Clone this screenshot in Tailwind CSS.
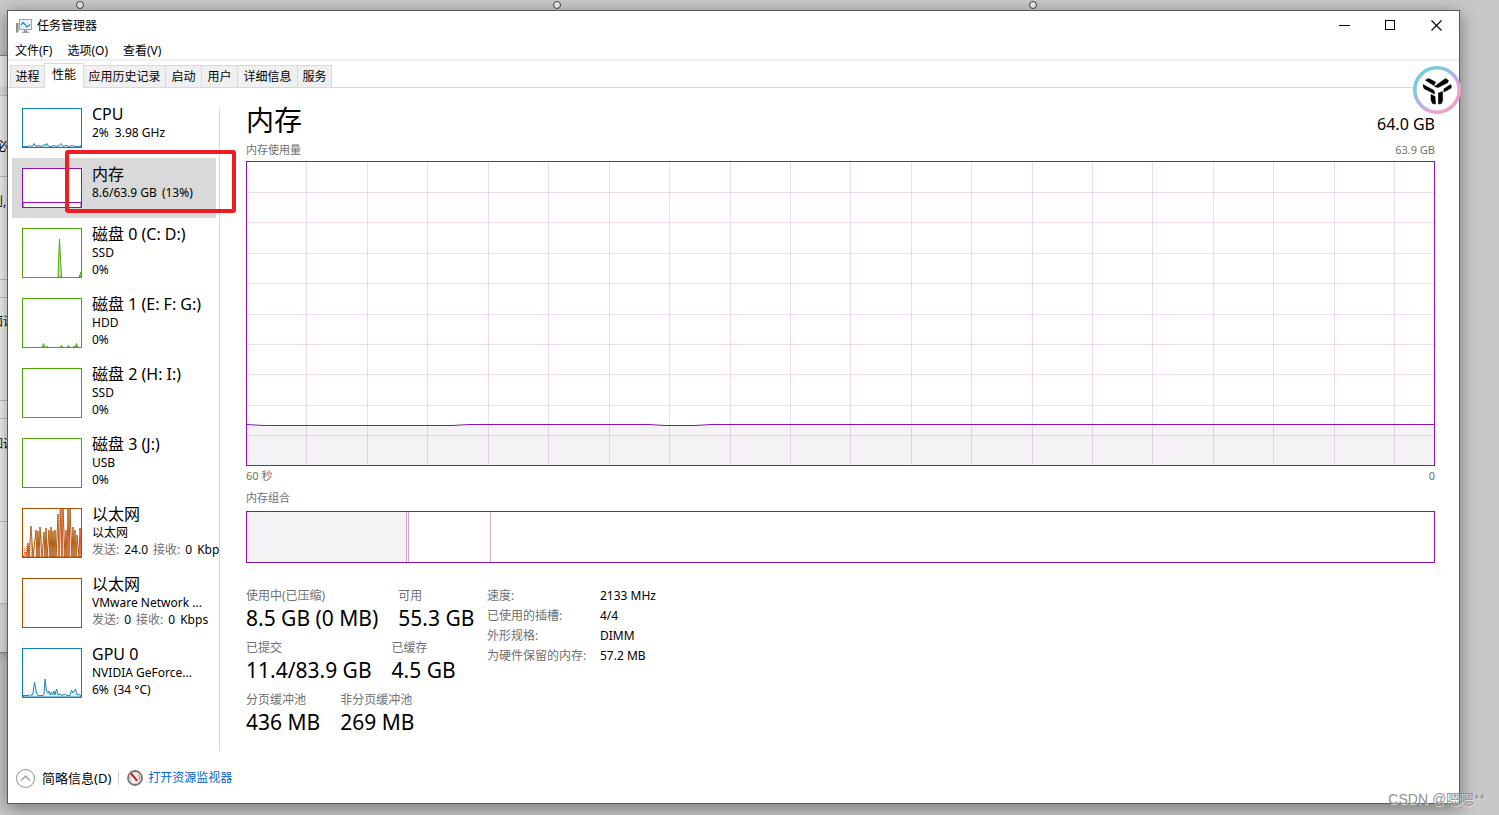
<!DOCTYPE html>
<html lang="zh-CN">
<head>
<meta charset="utf-8">
<title>任务管理器</title>
<script src="https://cdn.jsdelivr.net/npm/@tailwindcss/browser@4"></script>
</head>
<body class="relative flex min-h-screen overflow-x-hidden bg-[#c8c8c8] pt-[10px] pr-[39px] pb-[11px] pl-[7px] font-['Noto_Sans','Noto_Sans_CJK_SC',sans-serif] text-[12px] leading-5 text-black">

<!-- Window behind the task manager -->
<div class="absolute top-[55px] left-0 h-[598px] w-[8px] overflow-hidden border-y border-[#8a8a8a] bg-[#f3f3f3] shadow-[0_2px_10px_rgba(0,0,0,0.35)]">
  <div class="absolute top-[30px] h-[10px] w-full border-b border-[#c4c4c4] bg-[#e2e2e2]"></div>
  <div class="absolute top-[120px] h-px w-full bg-[#c4c4c4]"></div>
  <div class="absolute top-[223px] h-[19px] w-full border-y border-[#c4c4c4]"></div>
  <div class="absolute top-[344px] h-[19px] w-full border-y border-[#c4c4c4]"></div>
  <div class="absolute top-[465px] h-px w-full bg-[#c4c4c4]"></div>
  <div class="absolute top-[547px] h-[50px] w-full border-t border-[#c4c4c4] bg-[#e0e0e0]"></div>
  <span class="absolute top-[81px] -left-[4px] whitespace-nowrap">必</span>
  <span class="absolute top-[136px] -left-[9px] whitespace-nowrap">则,</span>
  <span class="absolute top-[256px] -left-[9px] whitespace-nowrap">面说</span>
  <span class="absolute top-[378px] -left-[9px] whitespace-nowrap">如调</span>
</div>

<!-- Selection handles -->
<div class="absolute top-[1px] left-[76px] size-2 rounded-full border border-[#444] bg-[#eee]"></div>
<div class="absolute top-[1px] left-[553px] size-2 rounded-full border border-[#444] bg-[#eee]"></div>
<div class="absolute top-[1px] left-[1029px] size-2 rounded-full border border-[#444] bg-[#eee]"></div>

<div class="relative flex min-w-0 flex-1 flex-col border border-[#5a5a5a] bg-white shadow-[0_4px_16px_rgba(0,0,0,0.42)]">

  <header class="flex h-[30px] items-center">
    <svg class="ml-2 h-4 w-4" viewBox="0 0 16 16" fill="none">
      <rect x="0" y="5" width="2.5" height="9.500" fill="#8c8f92"/>
      <rect x="0.5" y="6" width="1" height="2" fill="#5fae4a"/>
      <rect x="3.5" y="1.5" width="12" height="10" fill="#e4f1f9" stroke="#9da3a8"/>
      <path d="M5 7l2-2.5 2 2 2 2.5 3-2.5" stroke="#2386c4" stroke-width="1.2"/>
      <path d="M8 12h3v1.500h2V15H6v-1.500h2z" fill="#9da3a8"/>
    </svg>
    <h1 class="ml-[5px]">任务管理器</h1>
    <div class="ml-auto flex h-full pb-[2px]">
      <button class="flex w-[45px] items-center justify-center" aria-label="最小化"><svg width="11" height="11"><path d="M0 5.500h11" stroke="#000"/></svg></button>
      <button class="flex w-[46px] items-center justify-center" aria-label="最大化"><svg width="11" height="11" fill="none"><rect x="0.5" y="0.5" width="9" height="9" stroke="#000"/></svg></button>
      <button class="flex w-[46px] items-center justify-center" aria-label="关闭"><svg width="11" height="11"><path d="M.5.5l10 10M10.500.5l-10 10" stroke="#000" stroke-width="1.100"/></svg></button>
    </div>
  </header>

  <nav class="flex h-5 gap-[15px] border-b-2 border-[#f0f0f0] pl-[7px] leading-5" aria-label="菜单">
    <button>文件(F)</button>
    <button>选项(O)</button>
    <button>查看(V)</button>
  </nav>

  <div class="flex h-[27px] items-end border-b border-[#d9d9d9] pl-[2px]" role="tablist">
    <button role="tab" class="h-[22px] w-[34px] border-t border-l border-[#d9d9d9] bg-[#f0f0f0]">进程</button>
    <button role="tab" aria-selected="true" class="-mb-px h-[25px] w-[40px] border-x border-t border-[#d9d9d9] bg-white pb-[3px]">性能</button>
    <button role="tab" class="h-[22px] w-[82px] border-t border-r border-[#d9d9d9] bg-[#f0f0f0] whitespace-nowrap">应用历史记录</button>
    <button role="tab" class="h-[22px] w-[36px] border-t border-r border-[#d9d9d9] bg-[#f0f0f0]">启动</button>
    <button role="tab" class="h-[22px] w-[36px] border-t border-r border-[#d9d9d9] bg-[#f0f0f0]">用户</button>
    <button role="tab" class="h-[22px] w-[60px] border-t border-r border-[#d9d9d9] bg-[#f0f0f0] whitespace-nowrap">详细信息</button>
    <button role="tab" class="h-[22px] w-[34px] border-t border-r border-[#d9d9d9] bg-[#f0f0f0]">服务</button>
  </div>

  <div class="flex flex-1">
    <!-- Resource list -->
    <aside class="flex pt-[10px] pl-1">
      <div class="w-[207px]">
        <button class="flex h-[60px] w-[204px] gap-[10px] pl-[10px] text-left">
          <svg class="mt-[10px] h-10 w-[60px] shrink-0" viewBox="0 0 60 40" fill="none" stroke="#117dbb">
            <path d="M1 38.500h5l2-1 1 1 2-1 1-2 2 3 3-1 2 1 2-1 1.500-1 1.500 1 1-2 2 3h3l2-1 3 1 2-1 2-2 2 3 3-1 3 1 3-1 4 1h3l2-1v2H1z" fill="#cfe5f1" stroke-width=".9"/>
            <rect x=".5" y=".5" width="59" height="39"/>
          </svg>
          <span class="block w-[127px] shrink-0 overflow-hidden pt-[6px] leading-[17px] whitespace-nowrap"><b class="block text-[16px] leading-5 font-normal">CPU</b><span class="flex gap-[6px]"><span>2%</span><span>3.98 GHz</span></span></span>
        </button>
        <button class="relative flex h-[60px] w-[204px] gap-[10px] bg-[#d9d9d9] pl-[10px] text-left">
          <svg class="mt-[10px] h-10 w-[60px] shrink-0" viewBox="0 0 60 40" fill="none" stroke="#8b12ae">
            <rect x=".5" y=".5" width="59" height="39" fill="#fff"/>
            <path d="M1 34.500h58v5H1z" fill="#f4f2f4"/>
            <rect x=".5" y=".5" width="59" height="39"/>
          </svg>
          <span class="block w-[127px] shrink-0 overflow-hidden pt-[6px] leading-[17px] whitespace-nowrap"><b class="block text-[16px] leading-5 font-normal">内存</b><span class="flex gap-[5px]"><span>8.6/63.9 GB</span><span>(13%)</span></span></span>
          <span class="absolute -top-[8px] left-[53px] h-[63px] w-[171px] rounded-[3px] border-4 border-[#ee1c24]"></span>
        </button>
        <button class="flex h-[70px] w-[204px] gap-[10px] pl-[10px] text-left">
          <svg class="mt-[10px] h-[50px] w-[60px] shrink-0" viewBox="0 0 60 50" fill="none" stroke="#4da60c">
            <path d="M36 49l1.500-38L39.500 49zM57 49l2-5v5z" fill="#c9e4b6"/>
            <rect x=".5" y=".5" width="59" height="49"/>
          </svg>
          <span class="block w-[127px] shrink-0 overflow-hidden pt-[6px] leading-[17px] whitespace-nowrap"><b class="block text-[16px] leading-5 font-normal">磁盘 0 (C: D:)</b><span class="block">SSD</span><span class="block">0%</span></span>
        </button>
        <button class="flex h-[70px] w-[204px] gap-[10px] pl-[10px] text-left">
          <svg class="mt-[10px] h-[50px] w-[60px] shrink-0" viewBox="0 0 60 50" fill="none" stroke="#4da60c">
            <path d="M20 49l1.500-3.500L23 49zM38 49l1.500-1.500L41 49zM45 49l1.500-1.500L48 49zM53 49l1.500-3.500L56 49zM24 48.500h2M51 48.500h2" fill="#8fc765" stroke-width=".8"/>
            <rect x=".5" y=".5" width="59" height="49"/>
          </svg>
          <span class="block w-[127px] shrink-0 overflow-hidden pt-[6px] leading-[17px] whitespace-nowrap"><b class="block text-[16px] leading-5 font-normal">磁盘 1 (E: F: G:)</b><span class="block">HDD</span><span class="block">0%</span></span>
        </button>
        <button class="flex h-[70px] w-[204px] gap-[10px] pl-[10px] text-left">
          <span class="mt-[10px] block h-[50px] w-[60px] shrink-0 border border-[#4da60c]"></span>
          <span class="block w-[127px] shrink-0 overflow-hidden pt-[6px] leading-[17px] whitespace-nowrap"><b class="block text-[16px] leading-5 font-normal">磁盘 2 (H: I:)</b><span class="block">SSD</span><span class="block">0%</span></span>
        </button>
        <button class="flex h-[70px] w-[204px] gap-[10px] pl-[10px] text-left">
          <span class="mt-[10px] block h-[50px] w-[60px] shrink-0 border border-[#4da60c]"></span>
          <span class="block w-[127px] shrink-0 overflow-hidden pt-[6px] leading-[17px] whitespace-nowrap"><b class="block text-[16px] leading-5 font-normal">磁盘 3 (J:)</b><span class="block">USB</span><span class="block">0%</span></span>
        </button>
        <button class="flex h-[70px] w-[204px] gap-[10px] pl-[10px] text-left">
          <svg class="mt-[10px] h-[50px] w-[60px] shrink-0" viewBox="0 0 60 50" fill="none" stroke="#a74f01">
            <path d="M1 49L4 44L5 49L6 35L7 49L9 18L11 49L14 22L15 49L16 23L17 49L18 19L20 49L22 24L23 49L24 20L25 49L27 22L28 49L29 19L30 49L31 23L32 49L33 22L34 49L36 6L37 49L39 1L40 49L41 1L43 49L44 22L45 49L46 1L47 49L48 1L50 49L51 19L52 49L53 22L54 49L55 27L57 49L58 20L59 49z" fill="#d99a6c" fill-opacity=".35" stroke-width=".9"/>
            <path d="M2.500 49V39M4.500 49V38M9.500 49V19M19.500 49V27M37.500 49V1M40.500 49V1M46.500 49V24M53.500 49V30M58.500 49V21" stroke="#f0704a" stroke-dasharray="1 1"/>
            <rect x=".5" y=".5" width="59" height="49"/>
          </svg>
          <span class="block w-[127px] shrink-0 overflow-hidden pt-[6px] leading-[17px] whitespace-nowrap"><b class="block text-[16px] leading-5 font-normal">以太网</b><span class="block">以太网</span><span class="flex gap-[5px]"><span class="text-[#707070]">发送:</span><span>24.0</span><span class="text-[#707070]">接收:</span><span>0</span><span>Kbps</span></span></span>
        </button>
        <button class="flex h-[70px] w-[204px] gap-[10px] pl-[10px] text-left">
          <span class="mt-[10px] block h-[50px] w-[60px] shrink-0 border border-[#a74f01]"></span>
          <span class="block w-[127px] shrink-0 overflow-hidden pt-[6px] leading-[17px] whitespace-nowrap"><b class="block text-[16px] leading-5 font-normal">以太网</b><span class="block">VMware Network ...</span><span class="flex gap-[5px]"><span class="text-[#707070]">发送:</span><span>0</span><span class="text-[#707070]">接收:</span><span>0</span><span>Kbps</span></span></span>
        </button>
        <button class="flex h-[70px] w-[204px] gap-[10px] pl-[10px] text-left">
          <svg class="mt-[10px] h-[50px] w-[60px] shrink-0" viewBox="0 0 60 50" fill="none" stroke="#117dbb">
            <path d="M1 47.500H7L8 46.500L10 47.500L11 45L12.500 34L14.500 45L16 47.500H21L22 46L23 31L24.500 43L26 45L27 43L28 47L29.500 44L30.500 47L32 43L33 47L34.500 41L36 47L38 46L40 47.500L43 46L45 47.500H48L49.500 42L51 45L53.500 41L55 47L57 46.500L59 47.500V49H1z" fill="#e3f0f7" stroke-width=".9"/>
            <rect x=".5" y=".5" width="59" height="49"/>
          </svg>
          <span class="block w-[127px] shrink-0 overflow-hidden pt-[6px] leading-[17px] whitespace-nowrap"><b class="block text-[16px] leading-5 font-normal">GPU 0</b><span class="block">NVIDIA GeForce...</span><span class="flex gap-[5px]"><span>6%</span><span>(34 °C)</span></span></span>
        </button>
      </div>
      <div class="mt-[10px] w-px bg-[#d9d9d9]"></div>
    </aside>

    <!-- Memory details -->
    <main class="flex min-w-0 flex-1 flex-col pt-3 pr-6 pb-[17px] pl-[26px]">
      <div class="flex h-10 items-center justify-between">
        <h2 class="text-[28px] leading-10">内存</h2>
        <span class="mt-2 text-[16px]">64.0 GB</span>
      </div>
      <div class="mb-px flex justify-between text-[11px] text-[#707070]"><span>内存使用量</span><span>63.9 GB</span></div>
      <div class="relative min-h-[240px] flex-1 border border-[#8b12ae]">
        <svg class="absolute inset-0 h-full w-full" viewBox="0 0 1187 303" preserveAspectRatio="none" fill="none" stroke-width="1">
          <path d="M0 263.500L16 264.500H205L222 262.500H402L418 263.500H448L464 262.500H1187V303H0z" fill="#f4f2f4"/>
          <g stroke="#8b12ae" stroke-opacity=".15" shape-rendering="crispEdges">
            <path d="M59.500 0v303M120.500 0v303M180.500 0v303M241.500 0v303M301.500 0v303M362.500 0v303M422.500 0v303M483.500 0v303M543.500 0v303M603.500 0v303M664.500 0v303M724.500 0v303M785.500 0v303M845.500 0v303M905.500 0v303M966.500 0v303M1026.500 0v303M1087.500 0v303M1147.500 0v303"/>
            <path d="M0 30.500h1187M0 60.500h1187M0 91.500h1187M0 121.500h1187M0 152.500h1187M0 182.500h1187M0 212.500h1187M0 243.500h1187M0 273.500h1187"/>
          </g>
          <path d="M0 262.500L16 263.500H205L222 262.500H402L418 263.500H448L464 262.500H1187" stroke="#8b12ae"/>
        </svg>
      </div>
      <div class="flex justify-between text-[11px] text-[#707070]"><span>60 秒</span><span>0</span></div>
      <div class="mt-[2px] text-[11px] text-[#707070]">内存组合</div>
      <div class="mt-[3px] flex h-[52px] shrink-0 border border-[#8b12ae]">
        <div class="w-[13.5%] border-r border-[#cfaad9] bg-[#f4f2f4]"></div>
        <div class="w-[2px] border-r border-[#cfaad9]"></div>
        <div class="w-[6.9%] border-r border-[#cfaad9]"></div>
      </div>
      <div class="mt-[23px] flex gap-3">
        <div class="flex w-[229px] flex-col gap-2 whitespace-nowrap">
          <dl class="flex gap-5">
            <div><dt class="text-[#707070]">使用中(已压缩)</dt><dd class="text-[21px] leading-6">8.5 GB (0 MB)</dd></div>
            <div><dt class="text-[#707070]">可用</dt><dd class="text-[21px] leading-6">55.3 GB</dd></div>
          </dl>
          <dl class="flex gap-5">
            <div><dt class="text-[#707070]">已提交</dt><dd class="text-[21px] leading-6">11.4/83.9 GB</dd></div>
            <div><dt class="text-[#707070]">已缓存</dt><dd class="text-[21px] leading-6">4.5 GB</dd></div>
          </dl>
          <dl class="flex gap-5">
            <div><dt class="text-[#707070]">分页缓冲池</dt><dd class="text-[21px] leading-6">436 MB</dd></div>
            <div><dt class="text-[#707070]">非分页缓冲池</dt><dd class="text-[21px] leading-6">269 MB</dd></div>
          </dl>
        </div>
        <dl class="grid h-20 grid-cols-[113px_auto] whitespace-nowrap">
          <dt class="text-[#707070]">速度:</dt><dd>2133 MHz</dd>
          <dt class="text-[#707070]">已使用的插槽:</dt><dd>4/4</dd>
          <dt class="text-[#707070]">外形规格:</dt><dd>DIMM</dd>
          <dt class="text-[#707070]">为硬件保留的内存:</dt><dd>57.2 MB</dd>
        </dl>
      </div>
    </main>
  </div>

  <footer class="flex h-[52px] items-center pt-[2px] pl-2">
    <button class="flex items-center gap-[7px] text-[13px]">
      <svg class="size-[19px]" viewBox="0 0 19 19" fill="none" stroke="#8e8e8e"><circle cx="9.500" cy="9.500" r="9"/><path d="M5 11.500l4.500-4.500 4.500 4.500" stroke="#a0a0a0" stroke-width="1.500"/></svg>
      简略信息(D)
    </button>
    <span class="mr-2 ml-[7px] h-[14px] w-px bg-[#d0d0d0]"></span>
    <a href="#" class="flex items-center gap-[5px] text-[#0066cc]">
      <svg class="size-4" viewBox="0 0 16 16" fill="none"><circle cx="8" cy="8" r="7" fill="#f6f6f6" stroke="#777" stroke-width="1.800"/><circle cx="8" cy="8" r="5.600" stroke="#cfcfcf"/><path d="M4.500 11A4.800 4.800 0 0 1 4 6" stroke="#999" stroke-dasharray="1 1"/><path d="M11 4.500a4.800 4.800 0 0 1 1 5.500" stroke="#e07a4a"/><path d="M4 3.500l4 4.500 2 3" stroke="#d01414" stroke-width="2"/></svg>
      打开资源监视器
    </a>
  </footer>

  <!-- Floating assistant badge -->
  <svg class="absolute top-[55px] -right-[2px] size-12" viewBox="0 0 48 48" fill="none">
    <defs><linearGradient id="ring" x1="8" y1="6" x2="40" y2="42" gradientUnits="userSpaceOnUse"><stop stop-color="#6fcbdc"/><stop offset=".25" stop-color="#84c8e2"/><stop offset=".5" stop-color="#b5aeea"/><stop offset=".75" stop-color="#eda2d4"/><stop offset="1" stop-color="#ee9dc6"/></linearGradient></defs>
    <circle cx="24" cy="24" r="22.200" fill="#fff" stroke="url(#ring)" stroke-width="3.600"/>
    <path d="M12.500 14.200L15.500 12.500L22.500 16L21 19.500zM21.500 20.500L32.500 12.600L35.500 14.500L34.500 16.800L25 21.500zM10 18.500L21 24.500L21.500 28L11 22.500zM31 26L30.800 23L37.500 18.600L38.600 20.500L37.500 22.500zM18 28.500L22 30.500L22.500 38L19.500 37.500L18 34zM25.500 27L29.500 25.500L29.700 34L28.500 37.500L25.500 38z" fill="#000" stroke="#000" stroke-width=".6" stroke-linejoin="round"/>
  </svg>
</div>

<div class="absolute right-[14px] bottom-[6px] font-['Liberation_Sans','Noto_Sans_CJK_SC',sans-serif] text-[14px] whitespace-nowrap text-[#8f8f8f] [text-shadow:1px_1px_1px_#ffffffb0]">CSDN @嗯嗯**</div>
</body>
</html>
